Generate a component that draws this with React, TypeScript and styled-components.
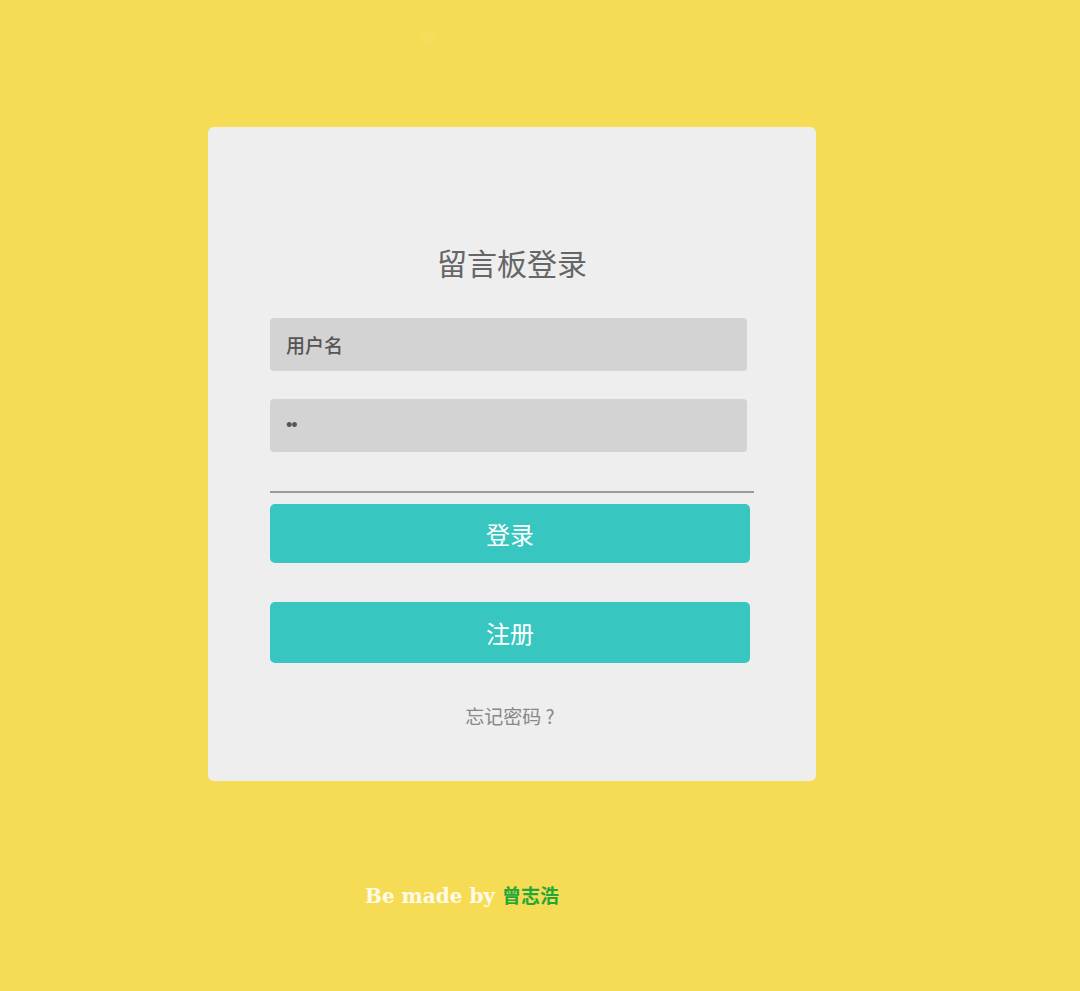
import styled, { createGlobalStyle } from 'styled-components';

const GlobalStyle = createGlobalStyle`
  html, body {
    margin: 0;
    padding: 0;
    background-color: #f6db55;
    font-family: "Noto Sans CJK SC", "Noto Sans", sans-serif;
  }
`;

const Page = styled.div`
  min-height: 991px;
  padding-top: 32px;
  box-sizing: border-box;
`;

const Dot = styled.div`
  width: 14px;
  height: 14px;
  margin-left: 421px;
  border-radius: 50%;
  background-color: rgba(255, 255, 255, 0.06);
`;

const Card = styled.div`
  width: 608px;
  margin: 81px 0 0 208px;
  padding: 115px 0 53px 62px;
  box-sizing: border-box;
  background-color: #eeeeee;
  border-radius: 6px;
`;

const Title = styled.h2`
  margin: 0 0 36px -62px;
  font-size: 30px;
  line-height: 40px;
  font-weight: 400;
  color: #666666;
  text-align: center;
`;

const Form = styled.form`
  display: flex;
  flex-direction: column;
  width: 484px;
`;

const Input = styled.input<{ $gap: number }>`
  width: 477px;
  height: 53px;
  margin-bottom: ${props => props.$gap}px;
  padding: 0 16px;
  box-sizing: border-box;
  border: none;
  border-radius: 4px;
  background-color: #d3d3d3;
  color: #555555;
  font-family: "Noto Sans CJK SC", sans-serif;
  font-size: 19px;
  outline: none;

  &::placeholder {
    color: #555555;
    font-weight: 500;
  }

  &[type='password'] {
    font-family: "Liberation Sans", sans-serif;
    font-size: 18px;
    letter-spacing: -1px;
  }
`;

const Divider = styled.hr`
  width: 484px;
  margin: 0 0 11px;
  border: none;
  border-top: 2px solid #9a9a9a;
`;

const Button = styled.button<{ $height: number }>`
  width: 480px;
  height: ${props => props.$height}px;
  border: none;
  border-radius: 5px;
  background-color: #37c6c0;
  color: #ffffff;
  font-family: "Noto Sans CJK SC", sans-serif;
  font-size: 24px;
  cursor: pointer;

  & + & {
    margin-top: 39px;
  }
`;

const Forgot = styled.a`
  display: block;
  width: 480px;
  margin-top: 41px;
  font-size: 19px;
  line-height: 24px;
  color: #888888;
  text-align: center;
  text-decoration: none;
`;

const Footer = styled.p`
  margin: 102px 0 0 365px;
  font-family: "DejaVu Serif", "Liberation Serif", serif;
  font-weight: 700;
  font-size: 20px;
  line-height: 24px;
  color: #fffbe8;
`;

const Author = styled.span`
  font-family: "Noto Sans CJK SC", sans-serif;
  font-size: 19px;
  color: #22a83a;
`;

export default function App() {
  return (
    <>
      <GlobalStyle />
      <Page>
        <Dot />
        <Card>
          <Title>留言板登录</Title>
          <Form onSubmit={e => e.preventDefault()}>
            <Input $gap={28} type="text" placeholder="用户名" />
            <Input $gap={39} type="password" defaultValue="12" />
            <Divider />
            <Button $height={59} type="submit">登录</Button>
            <Button $height={61} type="button">注册</Button>
            <Forgot href="#">忘记密码 ?</Forgot>
          </Form>
        </Card>
        <Footer>
          Be made by <Author>曾志浩</Author>
        </Footer>
      </Page>
    </>
  );
}
